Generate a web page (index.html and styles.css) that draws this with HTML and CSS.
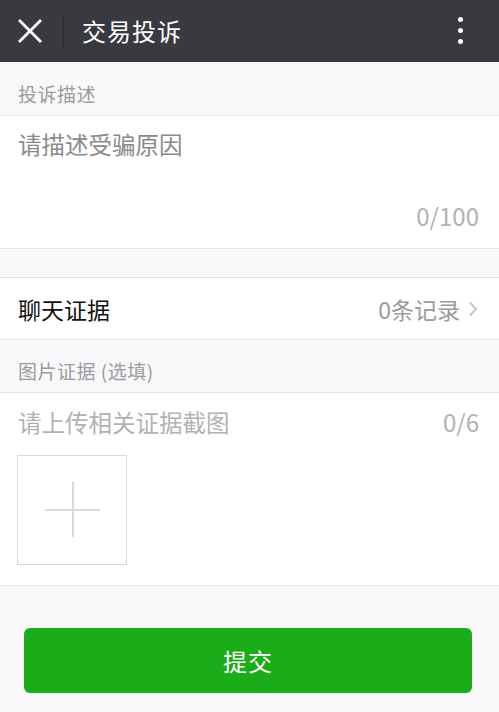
FILE: index.html
```html
<!DOCTYPE html>
<html lang="zh-CN">
<head>
<meta charset="utf-8">
<title>交易投诉</title>
<link rel="stylesheet" href="styles.css">
</head>
<body>
<header class="topbar">
  <div class="close">
    <svg width="24" height="24" viewBox="0 0 24 24"><path d="M2 2 L22 22 M22 2 L2 22" stroke="#fff" stroke-width="2.8" stroke-linecap="square" fill="none"/></svg>
  </div>
  <div class="divider"></div>
  <h1 class="title">交易投诉</h1>
  <div class="more">
    <span class="dot"></span><span class="dot"></span><span class="dot"></span>
  </div>
</header>

<div class="label label-first">投诉描述</div>
<div class="textarea">
  <div class="placeholder">请描述受骗原因</div>
  <div class="counter">0/100</div>
</div>

<div class="row">
  <span class="row-title">聊天证据</span>
  <span class="row-value">0条记录
    <svg class="chev" width="10" height="16" viewBox="0 0 10 16"><path d="M2 1.5 L8 8 L2 14.5" stroke="#c7c7cc" stroke-width="2" fill="none"/></svg>
  </span>
</div>

<div class="label label-second">图片证据 (选填)</div>
<div class="uploader">
  <div class="uploader-head">
    <span class="hint">请上传相关证据截图</span>
    <span class="count">0/6</span>
  </div>
  <div class="add-box">
    <span class="plus-h"></span>
    <span class="plus-v"></span>
  </div>
</div>

<div class="actions">
  <button class="submit">提交</button>
</div>
</body>
</html>
```

FILE: styles.css
```css
* { box-sizing: border-box; }
html, body {
  margin: 0;
  padding: 0;
  background: #f8f8fa;
  font-family: "Noto Sans CJK SC", "Noto Sans", sans-serif;
  width: 499px;
  height: 712px;
  overflow: hidden;
}
.topbar {
  height: 62px;
  background: #393a3f;
  display: flex;
  align-items: center;
  border-bottom: 1px solid #34353a;
}
.close {
  width: 63px;
  padding-left: 18px;
  display: flex;
  align-items: center;
}
.divider {
  width: 1px;
  height: 34px;
  background: #2b2c30;
}
.title {
  margin: 0 0 0 18px;
  font-size: 24px;
  font-weight: normal;
  color: #fff;
  line-height: 30px;
  letter-spacing: 1px;
  flex: 1;
}
.more {
  width: 40px;
  margin-right: 20px;
  display: flex;
  flex-direction: column;
  align-items: flex-end;
  gap: 6px;
  padding-right: 16px;
}
.dot {
  width: 5px;
  height: 5px;
  border-radius: 50%;
  background: #fff;
}
.label {
  font-size: 19px;
  line-height: 20px;
  color: #9b9b9b;
  padding: 22px 18px 11px;
  border-bottom: 1px solid #e5e5e5;
  letter-spacing: 0.5px;
}
.label-second {
  padding-top: 21px;
  padding-bottom: 11px;
  border-top: 1px solid #e5e5e5;
}
.textarea {
  background: #fff;
  height: 133px;
  padding: 12px 20px 16px 18px;
  display: flex;
  flex-direction: column;
  border-bottom: 1px solid #e5e5e5;
}
.placeholder {
  font-size: 23.5px;
  line-height: 32px;
  color: #8a8a8a;
}
.counter {
  margin-top: auto;
  text-align: right;
  font-size: 24px;
  line-height: 32px;
  color: #b2b2b2;
}
.row {
  margin-top: 28px;
  background: #fff;
  height: 62px;
  border-top: 1px solid #e5e5e5;
  display: flex;
  align-items: center;
  justify-content: space-between;
  padding: 0 21px 0 18px;
}
.row-title {
  font-size: 23px;
  color: #111;
}
.row-value {
  font-size: 23px;
  color: #9b9b9b;
  display: flex;
  align-items: center;
  gap: 8px;
}
.uploader {
  background: #fff;
  padding: 13px 20px 20px 17px;
  border-bottom: 1px solid #e5e5e5;
}
.uploader-head {
  display: flex;
  justify-content: space-between;
  line-height: 32px;
  padding-left: 1px;
}
.hint {
  font-size: 23.5px;
  color: #b2b2b2;
}
.count {
  font-size: 24px;
  color: #b2b2b2;
}
.add-box {
  margin-top: 17px;
  width: 110px;
  height: 110px;
  border: 1px solid #d9d9d9;
  position: relative;
}
.plus-h {
  position: absolute;
  left: 27px;
  top: 53px;
  width: 55px;
  height: 2px;
  background: #d9d9d9;
}
.plus-v {
  position: absolute;
  left: 54px;
  top: 26px;
  width: 2px;
  height: 55px;
  background: #d9d9d9;
}
.actions {
  padding: 42px 0 0 24px;
}
.submit {
  width: 448px;
  height: 65px;
  border: 0;
  border-radius: 6px;
  background: #1aad19;
  color: #fff;
  font-family: "Noto Sans CJK SC", "Noto Sans", sans-serif;
  font-size: 24px;
  letter-spacing: 1px;
}
```
